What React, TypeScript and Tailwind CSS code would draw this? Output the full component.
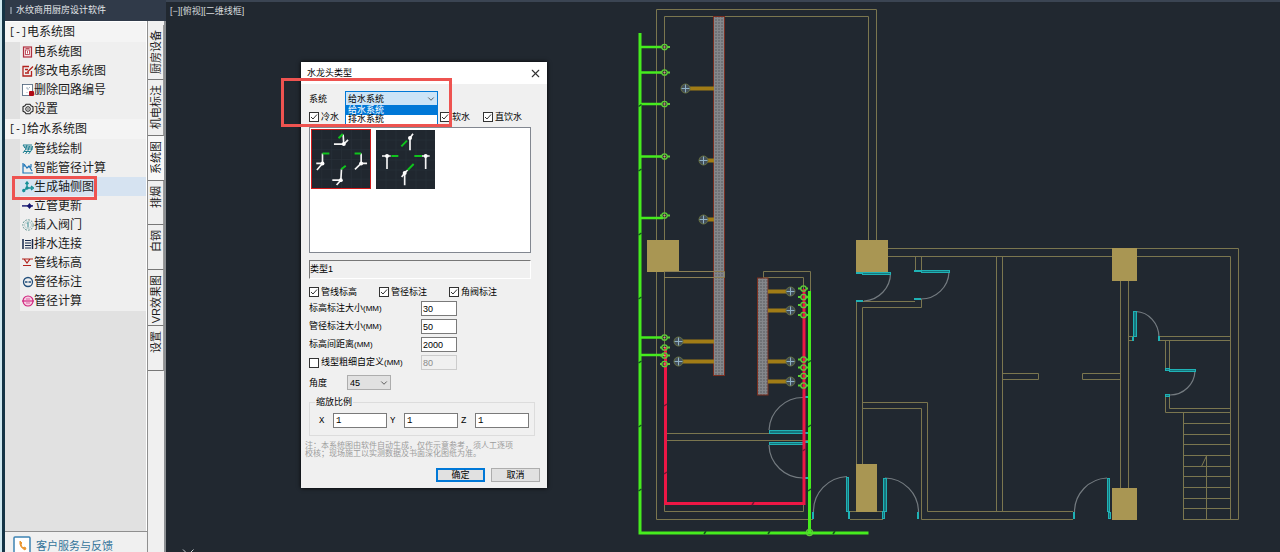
import React, { useState } from 'react';
import { X, ChevronDown } from 'lucide-react';

const groups = [
  {
    title: '电系统图',
    items: [
      { label: '电系统图', icon: 'box' },
      { label: '修改电系统图', icon: 'edit' },
      { label: '删除回路编号', icon: 'remove' },
      { label: '设置', icon: 'gear' },
    ],
  },
  {
    title: '给水系统图',
    items: [
      { label: '管线绘制', icon: 'pipes' },
      { label: '智能管径计算', icon: 'graph' },
      { label: '生成轴侧图', icon: 'axes' },
      { label: '立管更新', icon: 'riser' },
      { label: '插入阀门', icon: 'valve' },
      { label: '排水连接', icon: 'drain' },
      { label: '管线标高', icon: 'level' },
      { label: '管径标注', icon: 'diameter' },
      { label: '管径计算', icon: 'calc' },
    ],
  },
];

const tabs = [
  { label: '厨房设备', height: 'h-[55px]' },
  { label: '机电标注', height: 'h-[56px]' },
  { label: '系统图', height: 'h-[45px]' },
  { label: '排烟', height: 'h-[44px]' },
  { label: '白钢', height: 'h-[45px]' },
  { label: 'VR效果图', height: 'h-[56px]' },
  { label: '设置', height: 'h-[45px]' },
];

const TreeIcon = ({ name }: { name: string }) => {
  const shapes: Record<string, React.ReactNode> = {
    box: (
      <g stroke="#b03040">
        <rect x="1.5" y="1" width="8" height="10" fill="#f6dcde" strokeWidth="1.2" />
        <rect x="3.5" y="4" width="4" height="4.5" fill="#fff" strokeWidth="0.8" />
        <path d="M5.5 5v2.500M3.500 2.500h4" strokeWidth="0.8" />
      </g>
    ),
    edit: (
      <g stroke="#b3231f" fill="none" strokeWidth="1.3">
        <path d="M9.500 6v5H1V1.500h6M3 4.500h3M3 8h4M5.500 7L11 1.500" />
      </g>
    ),
    remove: (
      <g>
        <rect x="0.5" y="0.5" width="10" height="11" fill="#fff" stroke="#4a6078" strokeWidth="0.8" />
        <path d="M4 4h2v2M5 8v1M7.5 3v1" stroke="#8da0b0" fill="none" strokeWidth="0.8" />
        <rect x="7" y="7" width="5" height="5" rx="1" fill="#b00c18" />
      </g>
    ),
    gear: (
      <g stroke="#222" fill="none">
        <path d="M4 1.2h4l1 1.5 2 1v4.6l-2 1-1 1.5H4L3 9.300 1 8.300V3.700l2-1z" strokeWidth="1.1" strokeLinejoin="round" />
        <circle cx="6" cy="6" r="2.300" />
        <circle cx="6" cy="6" r="0.700" fill="#222" stroke="none" />
      </g>
    ),
    pipes: (
      <g stroke="#1e7f91" fill="none" strokeWidth="1">
        <path d="M1 2h9M2 4h9M1 2l2 3M5 2q-1 5-4 8M7.500 3q-1 5-4 8M10.500 3q-1 6-4 8M3 6h8M2 8.500h7" />
      </g>
    ),
    graph: (
      <g stroke="#1f76b8" fill="none" strokeWidth="1.2">
        <path d="M1 1v10H11M1 4h2M2 2l3 4 2-2 3 5M9 2v3H6" />
      </g>
    ),
    axes: (
      <g stroke="#178f98" strokeWidth="1.4" fill="none">
        <path d="M5 2v5L1.500 9.500M5 7h5M3.500 3L5 1l1.500 2M9 5l2.500 2L9 9" />
        <circle cx="5" cy="7" r="1" fill="#178f98" />
        <circle cx="1.800" cy="9.500" r="1" fill="#178f98" />
      </g>
    ),
    riser: (
      <g fill="#14146e">
        <path d="M0 5.200h11v1.400H0z" />
        <path d="M7.500 3L10 6 7.500 9 5 6z" />
      </g>
    ),
    valve: (
      <g stroke="#6c9c9a" fill="none">
        <circle cx="6" cy="6" r="5.200" strokeDasharray="2 1" />
        <circle cx="6" cy="6" r="3.500" stroke="#b8cfce" />
        <path d="M5 4.500l1-1v5" stroke="#30888e" />
      </g>
    ),
    drain: (
      <g stroke="#16284c" fill="none">
        <path d="M1 1v10M10.500 1v10" strokeWidth="1.500" />
        <path d="M3 2.500h6M3 5h6M3 7.500h6M3 10h6" strokeWidth="1.200" />
      </g>
    ),
    level: (
      <g stroke="#b1221c" fill="none" strokeWidth="1.200">
        <path d="M0 2h11M2 2l3 4 3-4M1 8.500h8" />
      </g>
    ),
    diameter: (
      <g stroke="#24507c" fill="none" strokeWidth="1.300">
        <circle cx="6" cy="6" r="4.500" />
        <path d="M3 6h2.500M6.500 6H9" />
      </g>
    ),
    calc: (
      <g stroke="#d0207c" fill="#f6cfe2" strokeWidth="1.100">
        <circle cx="6" cy="6" r="5" />
        <path d="M0 6h12" />
        <path d="M4 4h4M4 8h4" strokeWidth="0.600" />
      </g>
    ),
  };
  return (
    <svg viewBox="0 0 12 12" className="w-3 h-3 shrink-0" aria-hidden="true">
      {shapes[name]}
    </svg>
  );
};

const Sidebar = () => {
  const [selected, setSelected] = useState('生成轴侧图');
  return (
    <aside className="relative flex shrink-0 w-[166px] border-l-2 border-[#cfe8f0] bg-[#143446] pl-[3px]">
      <div className="flex flex-col flex-1 min-w-0">
        <div className="flex items-center gap-1 h-[21px] shrink-0 bg-[#303a49] pl-[5px] text-[9px] text-[#e4e7ea]">
          <span className="w-[2px] h-[7px] bg-[#75808d]" />
          水纹商用厨房设计软件
        </div>
        <div className="flex flex-1 min-h-0">
          <div className="flex flex-col flex-1 min-w-0 border-r border-[#8f8f8f]">
            <nav className="flex-1 min-h-0 bg-[#e1e1e1] border-t border-r border-white">
              {groups.map(g => (
                <section key={g.title}>
                  <h2 className="flex items-center h-5 pl-1 bg-[#f4f4f4] text-[12px] text-[#1c1c1c]">
                    <span className="text-[10px] font-['Liberation_Mono',monospace]">[-]</span>
                    {g.title}
                  </h2>
                  <ul className="ml-[15px] pb-px bg-[#efefef]">
                    {g.items.map(item => (
                      <li key={item.label}>
                        <button
                          type="button"
                          onClick={() => setSelected(item.label)}
                          className={`flex items-center w-full h-[19px] pl-[2px] text-[12px] text-[#1c1c1c] whitespace-nowrap ${selected === item.label ? 'bg-[#d6e3f1]' : ''}`}
                        >
                          <TreeIcon name={item.icon} />
                          {item.label}
                        </button>
                      </li>
                    ))}
                  </ul>
                </section>
              ))}
            </nav>
            <a href="#support" className="flex items-start h-[21px] shrink-0 overflow-hidden border-t border-[#8f8f8f] bg-[#f0f0f0] pl-2 pt-1 gap-[5px] text-[11px] leading-[20px] text-[#34749a] whitespace-nowrap">
              <svg viewBox="0 0 18 20" className="w-[18px] h-5 shrink-0" fill="none" aria-hidden="true">
                <rect x="1" y="1" width="16" height="18" rx="1" fill="#fff" stroke="#3c82b2" strokeWidth="1.500" />
                <path d="M7 5q-1 6 5 9l1-2-2-1-1 1q-2-2-2-4l1-1z" fill="#ea9630" stroke="#ea9630" />
              </svg>
              客户服务与反馈
            </a>
          </div>
          <div className="w-[18px] shrink-0 bg-[#f0f0f0] border-r-2 border-[#8c8f92] pt-1">
            {tabs.map(tab => (
              <button
                key={tab.label}
                type="button"
                className={`flex w-full items-start justify-center border-b pt-[5px] text-[11px] leading-[14px] text-[#1c1c1c] ${tab.height} ${tab.label === '系统图' ? 'border-[#777] bg-[#f8f8f8]' : 'border-[#777] border-r border-r-[#999]'}`}
              >
                <span className="rotate-180 [writing-mode:vertical-rl] [text-orientation:sideways] whitespace-nowrap">{tab.label}</span>
              </button>
            ))}
          </div>
        </div>
      </div>
      {/* callout around the active command */}
      <div className="absolute left-[10px] top-[176px] w-[85px] h-6 border-3 border-[#ee5350] pointer-events-none" />
    </aside>
  );
};

const fans = [
  [685, 88, 714], [703, 160, 714], [703, 219, 714], [678, 341, 714], [678, 361, 714],
  [790, 291, 768], [790, 310, 768], [790, 361, 768], [790, 381, 768],
];
const leftNodes = [47, 72.5, 104, 156.5, 215.5, 337.5, 347.5, 355.5, 364];
const rightNodes = [288.5, 297, 305, 315, 359.5, 367.5, 376, 385.5];
const stairs = [423.5, 434.5, 444.5, 455.5, 466.5, 476.5, 487.5, 498.5, 508.5, 519.5];
const jambs = [
  [804, 396, 5, 2], [804, 432, 5, 2], [804, 441, 5, 2], [804, 477, 5, 2],
  [812, 512, 2, 7], [848, 511, 2, 8], [882, 511, 3, 8], [917, 512, 2, 7],
  [914, 270, 7, 2], [914, 298, 7, 2], [856, 272, 7, 2], [856, 300, 7, 2],
  [1132, 337, 2, 4], [1158, 336, 2, 5], [1165, 368, 5, 3], [1165, 394, 5, 3],
  [1073, 512, 2, 7], [1108, 512, 3, 7],
];
const leaves = [
  [769, 430, 35, 4], [769, 442, 35, 3], [846, 477, 2, 35], [883, 478, 3, 34],
  [921, 270, 28, 3], [862, 272, 28, 3], [1133, 311, 3, 26], [1169, 369, 26, 3], [1107, 478, 2, 34],
];

const FloorPlan = () => (
  <svg viewBox="166 0 1114 552" className="absolute left-0 top-0 w-[1114px] h-[552px]" fill="none" aria-label="floor plan">
    <defs>
      <pattern id="mesh" width="3" height="3" patternUnits="userSpaceOnUse">
        <rect width="3" height="3" fill="#707276" />
        <path d="M0 0.500h3M0.500 0v3" stroke="#85878b" />
      </pattern>
    </defs>
    {/* walls */}
    <g stroke="#7b764f">
      <path d="M813 519.500H656.500V9.500H876.500V241M803.500 511.500H664.500V16.500H868.500V241" />
      <path d="M678 271.500H724.500V277.500H664.500M763.500 278V271.500H810.500V292M763.500 277.500H803.500V511.500" />
      <path d="M666 433.500H809M666 440.500H809" />
      <path d="M887 248.500H1238.500V519.500H1183M887 256.500H1230.500V519.500" />
      <path d="M856.500 464V301.500H915M862.500 464V307.500H921.500V299M862.500 402.500H927.500V511.500H1073M862.500 408.500H921.500V519.500H1073" />
      <path d="M850 511.500H883M850 519.500H883M915.500 257V271M921.500 257V271" />
      <path d="M996.500 257V511M1002.500 257V511M1002 373.500H1038.500V379.500H1002M1120 373.500H1082.500V379.500H1120" />
      <path d="M1120.500 280V488M1128.500 280V488M1128 336.500H1133M1128 340.500H1133M1159 336.500H1230M1159 340.500H1230" />
      <path d="M1165.500 341V369M1169.500 341V369M1165.500 396V412.500H1230M1169.500 396V408.500H1230M1183.500 412V520" />
      {stairs.map(y => <path key={y} d={`M1183 ${y}H1230`} />)}
      <path d="M1206.500 519V456L1201.500 466.500" />
    </g>
    <g fill="#a99653">
      <rect x="647" y="240" width="32" height="32" />
      <rect x="856" y="240" width="32" height="32" />
      <rect x="856" y="464" width="21" height="48" />
      <rect x="1112" y="248" width="25" height="33" />
      <rect x="1112" y="488" width="25" height="32" />
    </g>
    {/* drain channels */}
    <g fill="url(#mesh)" stroke="#7b2e1f">
      <rect x="713.500" y="16.500" width="11" height="359" />
      <rect x="757.500" y="278" width="10.500" height="117" />
    </g>
    <path d="M664 271.500H724.500V277.500H664" stroke="#8c8055" />
    {/* doors */}
    <g stroke="#747b80" strokeWidth="1.200">
      <path d="M769 430A34 34 0 0 1 804 397.500M769 445A34 34 0 0 0 804 478" />
      <path d="M813.500 512A35 35 0 0 1 847 476.500M885 478A34 34 0 0 1 918.500 512" />
      <path d="M949 272A28 28 0 0 1 921 299M890.500 273A28 28 0 0 1 864 301" />
      <path d="M1136 311.500A24 26 0 0 1 1159 337M1195 371A25 25 0 0 1 1170 395M1107 478A34 34 0 0 0 1074.500 512" />
    </g>
    <g fill="#16757c" stroke="#1fb2b5">
      {leaves.map(([x, y, w, h]) => <rect key={`${x}-${y}`} x={x + 0.5} y={y + 0.5} width={w} height={h - 1} />)}
      {jambs.map(([x, y, w, h]) => <rect key={`${x}-${y}`} x={x + 0.5} y={y + 0.5} width={w - 1} height={h - 1} />)}
    </g>
    {/* floor drains */}
    {fans.map(([x, y, end]) => (
      <g key={`${x}-${y}`}>
        <path d={`M${x} ${y + 0.5}H${end}`} stroke="#a17c16" strokeWidth="4" />
        <circle cx={x + 0.5} cy={y + 0.5} r="4.500" fill="#44505a" stroke="#66703f" />
        <path d={`M${x - 3.5} ${y + 0.5}h8M${x + 0.5} ${y - 3.5}v8`} stroke="#8fb0c4" />
      </g>
    ))}
    {/* supply pipes */}
    <g stroke="#46ec1e" strokeWidth="3">
      <path d="M640 33V533H868.500M809.500 291V533" />
      <path d="M640 47H662M640 72.500H662M640 104H662M640 156.500H662M640 218H663M640 337.500H662M640 355H664M804 297H809" strokeWidth="2.500" />
    </g>
    <g stroke="#ed1745" strokeWidth="3">
      <path d="M665.500 347V503.500H804V289" />
    </g>
    <g stroke="#5bcf36" strokeWidth="1.300">
      {leftNodes.map(y => (
        <g key={y}>
          <circle cx="664.500" cy={y} r="2.700" />
          <path d={`M660 ${y}h2M667 ${y}h3`} strokeWidth="2" />
          <path d={`M663.500 ${y}h2`} stroke="#d89a80" />
        </g>
      ))}
      {rightNodes.map(y => (
        <g key={y}>
          <circle cx="803.500" cy={y} r="2.700" />
          <path d={`M798 ${y}h3M806 ${y}h2`} strokeWidth="2" />
        </g>
      ))}
      <circle cx="809.500" cy="532.500" r="3" />
    </g>
    <g stroke="#12571a" strokeWidth="1.500">
      {[105.5, 170, 234, 298, 362, 426, 490].map(y => <path key={y} d={`M638.500 ${y + 1}l3-2`} />)}
      {[361.5, 426, 490].map(y => <path key={y} d={`M808 ${y + 1}l3-2`} />)}
      {[705, 769, 834].map(x => <path key={x} d={`M${x - 1} 534l2-3`} />)}
      <path d="M664 406l3-2M664 474l3-2M802.500 451l3-2M752 505l2-3" stroke="#7c1230" />
    </g>
    <path d="M183 549.500l3 3M193.500 549.500l-3 3" stroke="#c8cdd1" />
  </svg>
);

const Unit = () => <span className="text-[8px]">(MM)</span>;

const Check = ({ label, checked = true, unit = false }: { label: string; checked?: boolean; unit?: boolean }) => (
  <label className="flex items-center gap-[2px] whitespace-nowrap">
    <span className="relative flex w-[10px] h-[10px]">
      <input type="checkbox" defaultChecked={checked} className="peer appearance-none w-[10px] h-[10px] border border-[#333] bg-white" />
      <svg viewBox="0 0 10 10" className="absolute inset-0 hidden peer-checked:block pointer-events-none" fill="none" stroke="#333">
        <path d="M2 5l2 2 4-4.500" />
      </svg>
    </span>
    <span>{label}{unit && <Unit />}</span>
  </label>
);

const sizes = [
  { id: 'level', label: '标高标注大小', value: '30' },
  { id: 'diameter', label: '管径标注大小', value: '50' },
  { id: 'spacing', label: '标高间距离', value: '2000' },
];

const TapPreview = ({ kind }: { kind: 1 | 2 }) => (
  <svg viewBox="0 0 177 177" className="w-full h-full bg-[#20272f]" fill="none" strokeWidth="5">
    <path d="M30 0V177M60 0V177M90 0V177M120 0V177M150 0V177M0 30H177M0 60H177M0 90H177M0 120H177M0 150H177" stroke="#29313a" strokeWidth="2" />
    {kind === 1 ? (
      <>
        <path d="M95 14L97 43H67M97 43L110 30M32 72V102L15 122M13 102H32M150 72V102L131 120M150 102H168M90 120L88 153H62M88 153L75 168" stroke="#f4f4f4" />
        <path d="M81 25L94 12M32 72H53M130 72H150M89 120L103 109" stroke="#0fc41c" strokeWidth="6" />
        <g fill="#fff">
          <circle cx="97" cy="43" r="6" />
          <circle cx="32" cy="102" r="6" />
          <circle cx="150" cy="102" r="6" />
          <circle cx="88" cy="153" r="6" />
        </g>
      </>
    ) : (
      <>
        <path d="M102 61V24L111 11M18 78H44M33 78V117M138 78H161M149 78V117M86 166V129L77 141M86 129L95 120" stroke="#f4f4f4" />
        <path d="M93 32L76 49M46 78H67M115 78H138M95 120L113 102" stroke="#0fc41c" strokeWidth="6" />
        <g fill="#fff">
          <circle cx="102" cy="24" r="6" />
          <circle cx="33" cy="78" r="6" />
          <circle cx="149" cy="78" r="6" />
          <circle cx="86" cy="129" r="6" />
        </g>
      </>
    )}
  </svg>
);

const TapDialog = () => {
  const [system, setSystem] = useState('给水系统');
  const [preview, setPreview] = useState(1);
  return (
    <div role="dialog" aria-label="水龙头类型" className="absolute left-[135px] top-[62px] w-[246px] bg-[#f0f0f0] text-[9px] leading-[12px] text-black shadow-[0_0_4px_#000]">
      <div className="flex items-center justify-between h-[22px] bg-white pl-[6px] pr-[5px]">
        <h1>水龙头类型</h1>
        <button type="button" aria-label="关闭"><X size={13} strokeWidth={2} absoluteStrokeWidth={false} color="#333" /></button>
      </div>

      <div className="px-2 pt-[7px]">
        <div className="flex items-center">
          <label htmlFor="system" className="w-9">系统</label>
          <div className="relative w-[93px]">
            <select id="system" value={system} onChange={e => setSystem(e.target.value)} className="block appearance-none w-full h-[15px] pl-[2px] border border-[#0078d7] bg-[#cce4f7]">
              <option>给水系统</option>
              <option>排水系统</option>
            </select>
            <ChevronDown size={10} className="absolute right-[2px] top-[3px] text-[#444] pointer-events-none" />
            <ul className="absolute left-0 top-full w-full border-x border-[#0078d7] bg-white leading-[9px] z-10">
              <li className="bg-[#0078d7] pl-[2px] text-white">给水系统</li>
              <li className="pl-[2px]">排水系统</li>
            </ul>
          </div>
        </div>

        <div className="flex mt-[5px] h-3">
          <div className="w-[131px]"><Check label="冷水" /></div>
          <div className="w-[43px]"><Check label="软水" /></div>
          <Check label="直饮水" />
        </div>

        <div className="flex items-start gap-1 mt-1 mr-2 h-[126px] border border-[#828790] bg-white p-px">
          <button type="button" aria-label="类型1" onClick={() => setPreview(1)} className={`w-[60px] h-[60px] border ${preview === 1 ? 'border-[#d01a1a]' : 'border-white'}`}>
            <TapPreview kind={1} />
          </button>
          <button type="button" aria-label="类型2" onClick={() => setPreview(2)} className={`w-[61px] h-[61px] border ${preview === 2 ? 'border-[#d01a1a]' : 'border-white'}`}>
            <TapPreview kind={2} />
          </button>
        </div>

        <div className="flex mt-[7px] mr-2">
          <input aria-label="类型" readOnly value={`类型${preview}`} className="w-full h-[19px] pb-[2px] border border-t-[#777] border-l-[#777] border-r-white border-b-white bg-[#f0f0f0]" />
        </div>

        <div className="flex mt-[7px] h-3">
          <div className="w-[70px]"><Check label="管线标高" /></div>
          <div className="w-[70px]"><Check label="管径标注" /></div>
          <Check label="角阀标注" />
        </div>

        <div className="flex flex-col gap-[3px] mt-[3px]">
          {sizes.map(s => (
            <div key={s.id} className="flex items-center">
              <label htmlFor={s.id} className="w-28">{s.label}<Unit /></label>
              <input id={s.id} defaultValue={s.value} className="w-9 h-[15px] pl-px border border-[#7a7a7a] bg-white" />
            </div>
          ))}
          <div className="flex items-center">
            <div className="w-28"><Check label="线型粗细自定义" checked={false} unit /></div>
            <input aria-label="线宽" disabled defaultValue="80" className="w-9 h-[15px] pl-px border border-[#ccc] bg-[#f0f0f0] text-[#8a8a8a]" />
          </div>
        </div>

        <div className="flex items-center mt-[5px]">
          <label htmlFor="angle" className="w-[38px]">角度</label>
          <div className="relative w-[44px]">
            <select id="angle" className="block appearance-none w-full h-[15px] pl-[2px] border border-[#adadad] bg-[#e1e1e1]">
              <option>45</option>
              <option>30</option>
            </select>
            <ChevronDown size={10} className="absolute right-[2px] top-[3px] text-[#444] pointer-events-none" />
          </div>
        </div>

        <fieldset className="flex justify-between mt-[6px] mr-1 border border-[#dcdcdc] pl-[9px] pr-[5px] pt-[5px] pb-[7px]">
          <legend className="-ml-1 px-px">缩放比例</legend>
          {['X', 'Y', 'Z'].map(axis => (
            <label key={axis} className="flex items-center font-['Liberation_Mono',monospace]">
              <span className="w-[14px]">{axis}</span>
              <input defaultValue="1" className="w-[54px] h-[15px] pl-[2px] border border-[#7a7a7a] bg-white" />
            </label>
          ))}
        </fieldset>
      </div>

      <p className="mt-[6px] pl-1 text-[8px] leading-[8px] text-[#9c9c9c] whitespace-nowrap">
        注：本系统图由软件自动生成，仅作示意参考，须人工逐项<br />
        校核；现场施工以实测数据及书面深化图纸为准。
      </p>
      <div className="flex justify-end gap-[6px] mt-[10px] px-[7px] pb-[6px]">
        <button type="button" className="w-[49px] h-[14px] leading-[10px] border-2 border-[#0078d7] bg-[#e1e1e1]">确定</button>
        <button type="button" className="w-[49px] h-[14px] leading-[12px] border border-[#adadad] bg-[#e1e1e1]">取消</button>
      </div>
    </div>
  );
};

export default function App() {
  return (
    <div className="flex h-screen overflow-hidden bg-[#212830] font-['Liberation_Sans','Noto_Sans_CJK_SC',sans-serif]">
      <Sidebar />
      <main className="relative flex-1 min-w-0 overflow-hidden border-t-2 border-[#3b4553]">
        <p className="pl-1 pt-[3px] text-[9px] leading-[12px] text-[#d5d8db]">[−][俯视][二维线框]</p>
        <div className="absolute left-0 -top-[2px]">
          <FloorPlan />
          <TapDialog />
          <div className="absolute left-[115px] top-[78px] w-[171px] h-[49px] border-3 border-[#ee5350] pointer-events-none z-20" />
        </div>
      </main>
    </div>
  );
}
